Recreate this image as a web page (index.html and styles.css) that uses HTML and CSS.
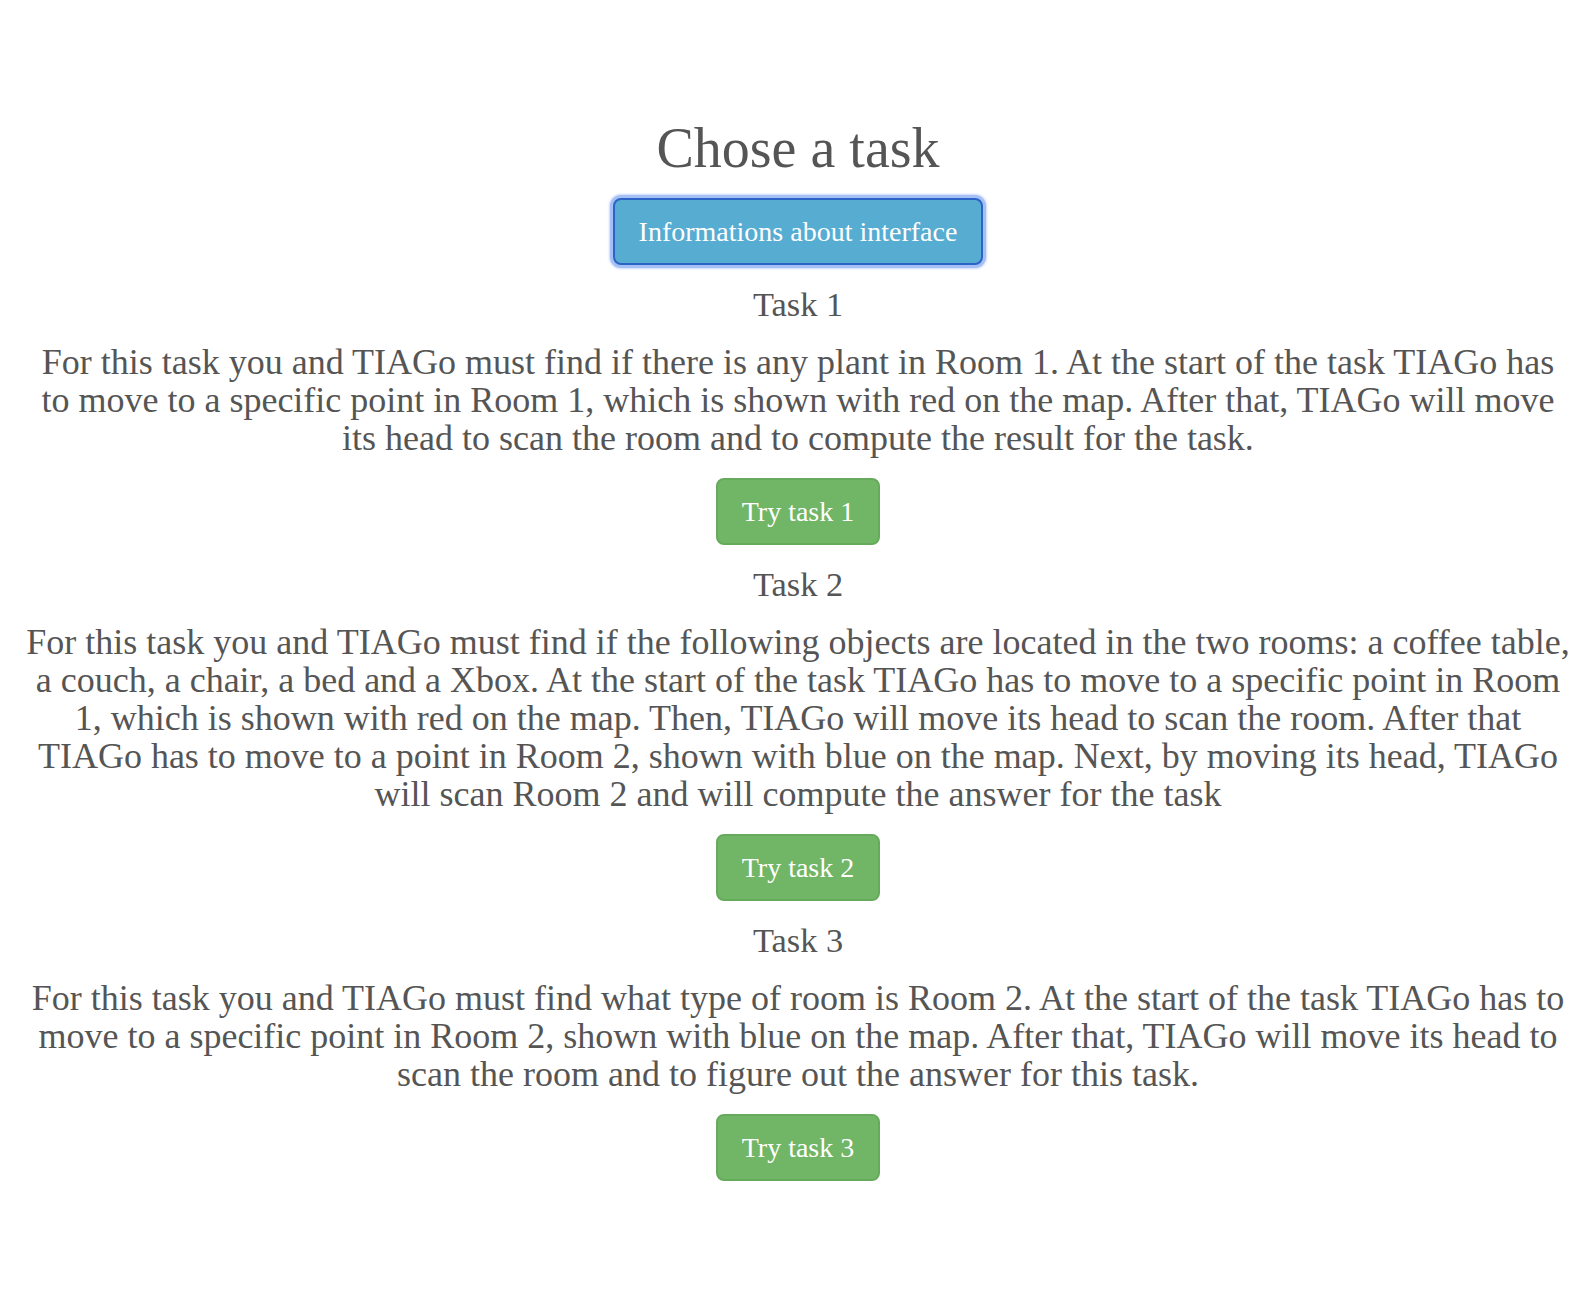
FILE: index.html
```html
<!DOCTYPE html>
<html lang="en">
<head>
<meta charset="utf-8">
<title>Chose a task</title>
<link rel="stylesheet" href="styles.css">
</head>
<body>
<main class="page">
  <h1 class="title">Chose a task</h1>
  <button class="btn btn-info" type="button">Informations about interface</button>

  <section class="task">
    <h2 class="task-title">Task 1</h2>
    <p class="task-text">For this task you and TIAGo must find if there is any plant in Room 1. At the start of the task TIAGo has to move to a specific point in Room 1, which is shown with red on the map. After that, TIAGo will move its head to scan the room and to compute the result for the task.</p>
    <button class="btn btn-success" type="button">Try task 1</button>
  </section>

  <section class="task">
    <h2 class="task-title">Task 2</h2>
    <p class="task-text">For this task you and TIAGo must find if the following objects are located in the two rooms: a coffee table, a couch, a chair, a bed and a Xbox. At the start of the task TIAGo has to move to a specific point in Room 1, which is shown with red on the map. Then, TIAGo will move its head to scan the room. After that TIAGo has to move to a point in Room 2, shown with blue on the map. Next, by moving its head, TIAGo will scan Room 2 and will compute the answer for the task</p>
    <button class="btn btn-success" type="button">Try task 2</button>
  </section>

  <section class="task">
    <h2 class="task-title">Task 3</h2>
    <p class="task-text">For this task you and TIAGo must find what type of room is Room 2. At the start of the task TIAGo has to move to a specific point in Room 2, shown with blue on the map. After that, TIAGo will move its head to scan the room and to figure out the answer for this task.</p>
    <button class="btn btn-success" type="button">Try task 3</button>
  </section>
</main>
</body>
</html>
```

FILE: styles.css
```css
html, body {
  margin: 0;
  padding: 0;
  background: #ffffff;
}

body {
  font-family: "Liberation Serif", "Times New Roman", serif;
  color: #555555;
}

.page {
  display: flex;
  flex-direction: column;
  align-items: center;
  text-align: center;
  padding: 118px 24.5px 0;
}

.title {
  font-size: 56px;
  line-height: 1.1;
  font-weight: normal;
  margin: 0 0 18px;
}

.task {
  display: flex;
  flex-direction: column;
  align-items: center;
  width: 100%;
}

.task-title {
  font-size: 34.4px;
  line-height: 1.1;
  font-weight: normal;
  margin: 21.5px 0 18.7px;
}

.task-text {
  font-size: 36px;
  line-height: 38px;
  margin: 0 0 21px;
}

.btn {
  font-family: "Liberation Serif", "Times New Roman", serif;
  font-size: 28px;
  line-height: 39px;
  padding: 12px 24px;
  border: 2px solid transparent;
  border-radius: 8px;
  color: #ffffff;
  cursor: pointer;
}

.btn-info {
  background: #57acd2;
  border-color: #2c63c7;
  box-shadow: 0 0 0 3px #a6c0f6, 0 0 2px 4px rgba(166, 192, 246, 0.6);
}

.btn-success {
  background: #71b566;
  border-color: #66ab5b;
}
```
